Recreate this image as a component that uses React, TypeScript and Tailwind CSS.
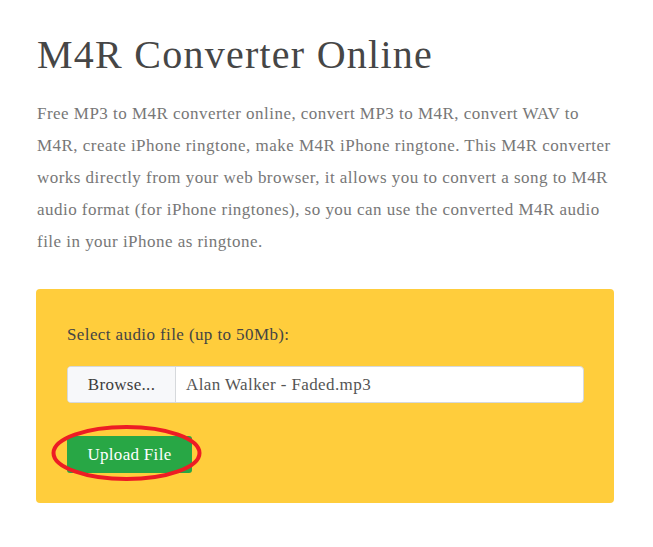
import React from "react";

const serif = "font-['Liberation_Serif','Times_New_Roman',serif]";

const App = () => {
  return (
    <div className={`min-h-screen bg-white ${serif}`}>
      <div className="w-[578px] ml-[36px] pt-[31px]">
        <h1 className="text-[40px] leading-[48px] tracking-[1.25px] text-[#464646] font-normal pl-[1px]">
          M4R Converter Online
        </h1>

        <p className="mt-[19px] text-[17px] leading-[32px] tracking-[0.47px] text-[#777777] pl-[1px] whitespace-nowrap">
          Free MP3 to M4R converter online, convert MP3 to M4R, convert WAV to
          <br />
          M4R, create iPhone ringtone, make M4R iPhone ringtone. This M4R converter
          <br />
          works directly from your web browser, it allows you to convert a song to M4R
          <br />
          audio format (for iPhone ringtones), so you can use the converted M4R audio
          <br />
          file in your iPhone as ringtone.
        </p>

        {/* Upload Card */}
        <div className="mt-[31px] bg-[#ffcd3c] rounded-[4px] pl-[31px] pr-[30px] pt-[34px] pb-[30px]">
          <label className="block text-[17px] leading-[24px] tracking-[0.4px] text-[#444444]">
            Select audio file (up to 50Mb):
          </label>

          <div className="mt-[19px] flex h-[37px] w-[517px] rounded-[4px] border border-[#d6d9dc] bg-white overflow-hidden">
            <div className="w-[108px] flex items-center justify-center bg-[#f7f8fa] border-r border-[#d6d9dc] text-[17px] tracking-[0.3px] text-[#3d3d3d]">
              Browse...
            </div>
            <div className="flex items-center pl-[10px] text-[17px] tracking-[0.4px] text-[#555555]">
              Alan Walker - Faded.mp3
            </div>
          </div>

          <div className="relative mt-[33px] w-[125px]">
            <button className="w-[125px] h-[37px] bg-[#28a745] text-white text-[17px] tracking-[0.3px] rounded-[3px]">
              Upload File
            </button>
            <svg
              className="absolute left-[-17px] top-[-12px] pointer-events-none"
              width="153"
              height="58"
              viewBox="0 0 153 58"
            >
              <ellipse
                cx="76.5"
                cy="29"
                rx="73"
                ry="26"
                fill="none"
                stroke="#ed1c24"
                strokeWidth="4"
              />
            </svg>
          </div>
        </div>
      </div>
    </div>
  );
};

export default App;
